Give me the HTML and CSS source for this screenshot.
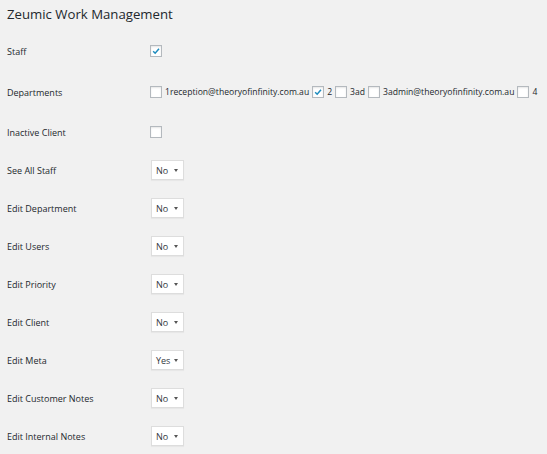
FILE: index.html
```html
<!DOCTYPE html>
<html>
<head>
<meta charset="utf-8">
<link rel="stylesheet" href="styles.css">
</head>
<body>
<h2 class="title">Zeumic Work Management</h2>
<div class="table">
  <div class="row row-first">
    <div class="label">Staff</div>
    <div class="field"><span class="cb checked"><svg viewBox="0 0 12 12"><path d="M2.6 6.2 L5 8.6 L9.6 3.2" /></svg></span></div>
  </div>
  <div class="row row-dept">
    <div class="label">Departments</div>
    <div class="field depts">
      <span class="cb"></span><span class="opt">1reception@theoryofinfinity.com.au</span>
      <span class="cb checked"><svg viewBox="0 0 12 12"><path d="M2.6 6.2 L5 8.6 L9.6 3.2" /></svg></span><span class="opt">2</span>
      <span class="cb"></span><span class="opt">3ad</span>
      <span class="cb"></span><span class="opt">3admin@theoryofinfinity.com.au</span>
      <span class="cb"></span><span class="opt">4</span>
    </div>
  </div>
  <div class="row row-sel">
    <div class="label">Inactive Client</div>
    <div class="field"><span class="cb"></span></div>
  </div>
  <div class="row row-sel">
    <div class="label">See All Staff</div>
    <div class="field"><div class="sel"><span>No</span><svg class="arr" viewBox="0 0 4 3"><path d="M0 0H4L2 3Z"/></svg></div></div>
  </div>
  <div class="row row-sel">
    <div class="label">Edit Department</div>
    <div class="field"><div class="sel"><span>No</span><svg class="arr" viewBox="0 0 4 3"><path d="M0 0H4L2 3Z"/></svg></div></div>
  </div>
  <div class="row row-sel">
    <div class="label">Edit Users</div>
    <div class="field"><div class="sel"><span>No</span><svg class="arr" viewBox="0 0 4 3"><path d="M0 0H4L2 3Z"/></svg></div></div>
  </div>
  <div class="row row-sel">
    <div class="label">Edit Priority</div>
    <div class="field"><div class="sel"><span>No</span><svg class="arr" viewBox="0 0 4 3"><path d="M0 0H4L2 3Z"/></svg></div></div>
  </div>
  <div class="row row-sel">
    <div class="label">Edit Client</div>
    <div class="field"><div class="sel"><span>No</span><svg class="arr" viewBox="0 0 4 3"><path d="M0 0H4L2 3Z"/></svg></div></div>
  </div>
  <div class="row row-sel">
    <div class="label">Edit Meta</div>
    <div class="field"><div class="sel"><span>Yes</span><svg class="arr" viewBox="0 0 4 3"><path d="M0 0H4L2 3Z"/></svg></div></div>
  </div>
  <div class="row row-sel">
    <div class="label">Edit Customer Notes</div>
    <div class="field"><div class="sel"><span>No</span><svg class="arr" viewBox="0 0 4 3"><path d="M0 0H4L2 3Z"/></svg></div></div>
  </div>
  <div class="row row-sel">
    <div class="label">Edit Internal Notes</div>
    <div class="field"><div class="sel"><span>No</span><svg class="arr" viewBox="0 0 4 3"><path d="M0 0H4L2 3Z"/></svg></div></div>
  </div>
</div>
</body>
</html>
```
FILE: styles.css
```css
html, body {
  margin: 0;
  background: #f1f1f1;
}
body {
  padding: 0 7px;
  font-family: "Open Sans", "Noto Sans", sans-serif;
  color: #23282d;
  font-size: 9px;
}
.title {
  margin: 0;
  padding-top: 5px;
  height: 26px;
  font-size: 13.2px;
  font-weight: 400;
  line-height: 18px;
}
.table {
  display: flex;
  flex-direction: column;
}
.row {
  display: flex;
  align-items: center;
}
.row-first { height: 40px; }
.row-dept { height: 42px; }
.row-sel { height: 38px; }
.label {
  width: 143px;
  flex: none;
  font-size: 9px;
}
.field {
  display: flex;
  align-items: center;
  flex: none;
}
.cb {
  width: 10px;
  height: 10px;
  border: 1px solid #b4b9be;
  background: #fff;
  box-shadow: inset 0 1px 2px rgba(0,0,0,0.1);
  display: inline-flex;
  flex: none;
}
.cb svg {
  width: 10px;
  height: 10px;
  fill: none;
  stroke: #1e8cbe;
  stroke-width: 1.8;
}
.depts .opt {
  font-size: 8.6px;
  margin: 0 3px 0 3px;
  white-space: nowrap;
}
.sel {
  margin-left: 1px;
  width: 31px;
  height: 18px;
  border: 1px solid #ddd;
  background: #fff;
  display: flex;
  align-items: center;
  box-shadow: 0 1px 1px rgba(0,0,0,0.04);
  font-size: 9px;
  color: #32373c;
  box-sizing: content-box;
}
.sel span {
  margin-left: 4px;
}
.arr {
  width: 4px;
  height: 3px;
  fill: #555;
  margin-left: auto;
  margin-right: 5px;
}
```
